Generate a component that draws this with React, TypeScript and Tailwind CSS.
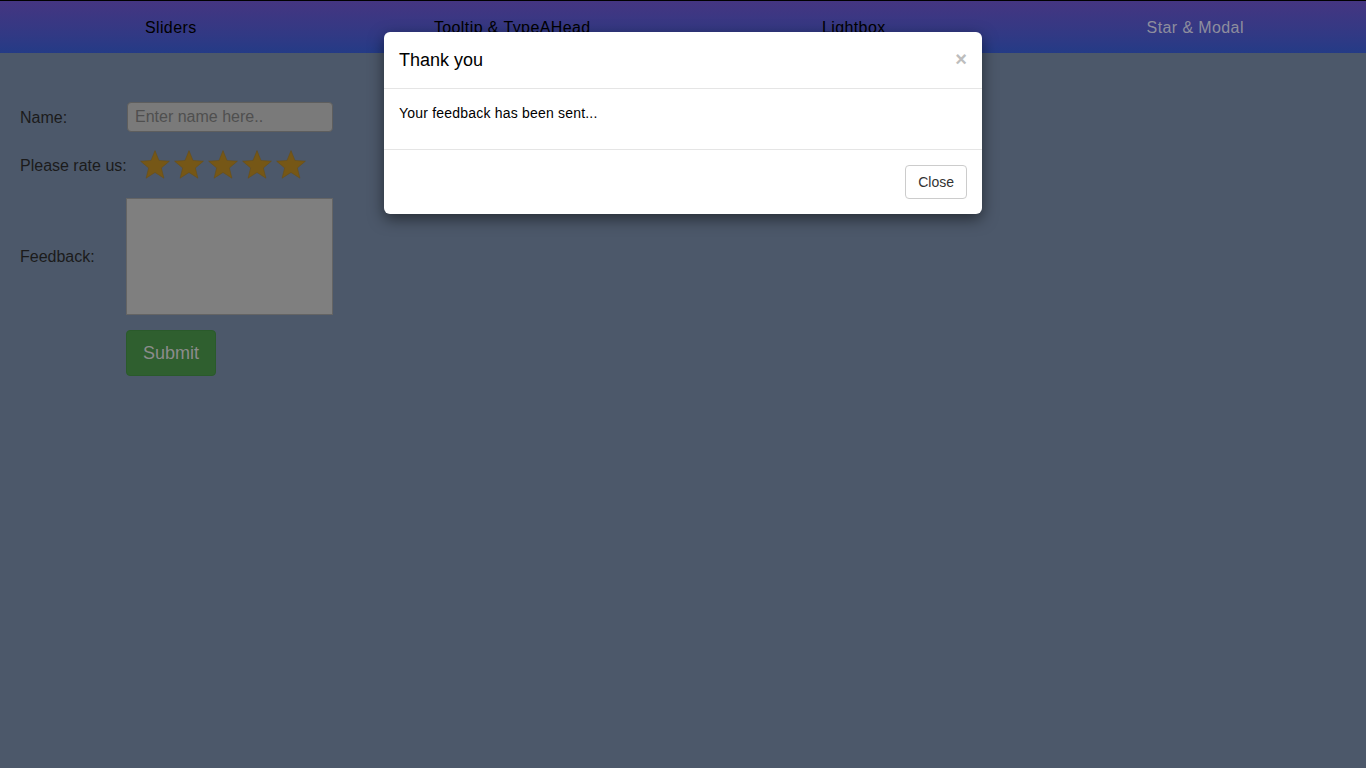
import { useState } from "react";

const tabs = ["Sliders", "Tooltip & TypeAHead", "Lightbox", "Star & Modal"];

const Star = () => (
  <svg width="32" height="32" viewBox="0 0 24 24">
    <polygon
      points="12,1.2 15,8.6 22.8,9.1 16.8,14.2 18.7,21.9 12,17.6 5.3,21.9 7.2,14.2 1.2,9.1 9,8.6"
      fill="#765716"
      stroke="#684d15"
      strokeWidth="0.4"
    />
  </svg>
);

const App = () => {
  const [open, setOpen] = useState(true);

  return (
    <div
      className="relative min-h-screen w-full bg-[#4c586a] text-[#1b1b1b]"
      style={{ fontFamily: '"Liberation Sans", Arial, sans-serif' }}
    >
      {/* Nav */}
      <nav className="h-[53px] border-t border-black bg-gradient-to-b from-[#443581] to-[#243b86] grid grid-cols-4">
        {tabs.map((t, i) => (
          <div
            key={t}
            className={`flex items-center justify-center pt-[2px] text-base tracking-[0.4px] ${
              i === 3 ? "text-[#8e8e9e]" : "text-black"
            }`}
          >
            {t}
          </div>
        ))}
      </nav>

      {/* Form */}
      <div className="pl-5 pt-[49px] text-base">
        <div className="flex items-center">
          <label className="w-[107px] pt-[2px]">Name:</label>
          <input
            className="w-[206px] h-[30px] rounded-[4px] border border-[#5e5e5e] bg-[#7a7a7a] px-[7px] text-base placeholder:text-[#4f4f4f] outline-none"
            placeholder="Enter name here.."
          />
        </div>
        <div className="flex items-center mt-[17px]">
          <label className="w-[119px] pt-[2px]">Please rate us:</label>
          <div className="flex gap-[2px]">
            {[0, 1, 2, 3, 4].map(i => (
              <Star key={i} />
            ))}
          </div>
        </div>
        <div className="flex items-center mt-[17px]">
          <label className="w-[106px]">Feedback:</label>
          <div className="w-[207px] h-[117px] border border-[#646464] bg-[#7f7f7f]" />
        </div>
        <div className="pl-[106px] mt-[15px]">
          <button className="w-[90px] h-[46px] rounded-[4px] border border-[#2a5a2b] bg-[#2f5f2f] text-lg text-[#8c8c8c]">
            Submit
          </button>
        </div>
      </div>

      {/* Modal */}
      {open && (
        <div className="absolute left-[384px] top-[32px] w-[598px] rounded-[6px] bg-white shadow-[0_5px_15px_rgba(0,0,0,0.5)] text-black">
          <div className="flex items-center justify-between h-[57px] px-[15px] border-b border-[#e5e5e5]">
            <h4 className="text-lg">Thank you</h4>
            <button
              onClick={() => setOpen(false)}
              className="text-[#bdbdbd] text-xl font-bold leading-none -mt-[2px]"
            >
              ×
            </button>
          </div>
          <div className="h-[61px] px-[15px] pt-[14px] text-sm tracking-[0.2px] border-b border-[#e5e5e5]">
            Your feedback has been sent...
          </div>
          <div className="flex justify-end px-[15px] pt-[15px] pb-[15px]">
            <button
              onClick={() => setOpen(false)}
              className="h-[34px] px-3 rounded-[4px] border border-[#cccccc] bg-white text-sm text-[#333]"
            >
              Close
            </button>
          </div>
        </div>
      )}
    </div>
  );
};

export default App;
